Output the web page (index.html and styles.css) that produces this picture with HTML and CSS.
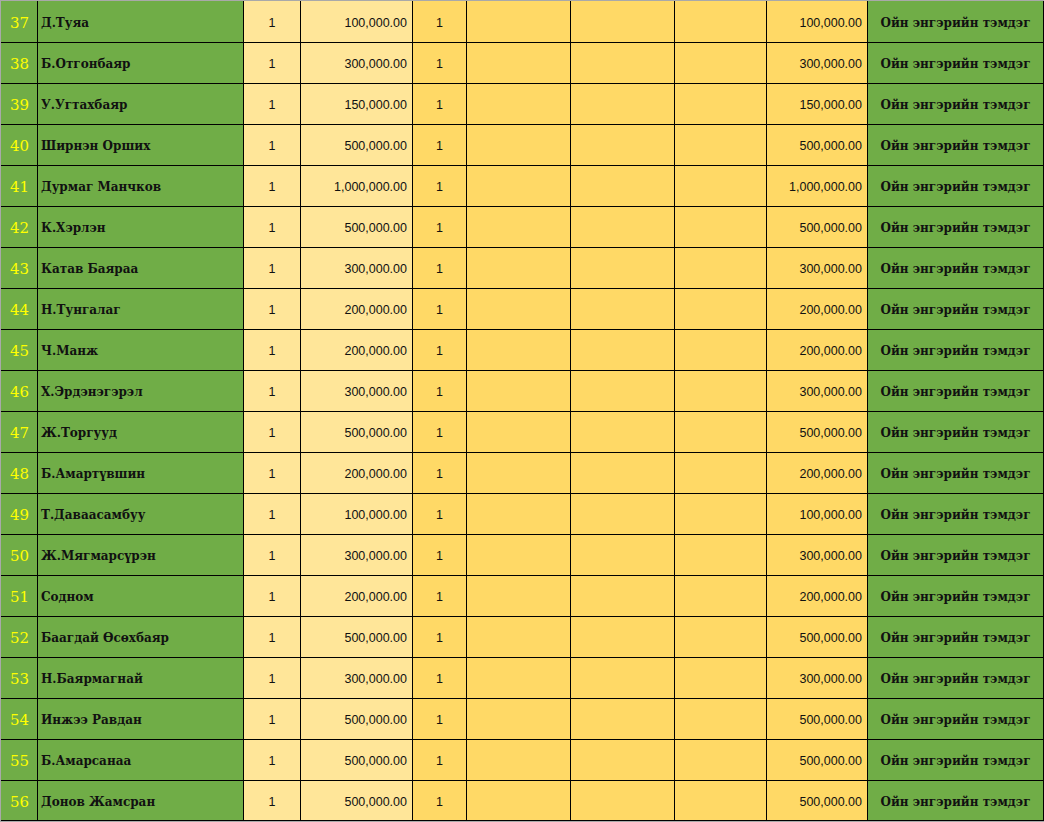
FILE: index.html
```html
<!DOCTYPE html>
<html>
<head>
<meta charset="utf-8">
<link rel="stylesheet" href="styles.css">
</head>
<body>
<div class="frame">
<div class="sheet">
<div class="c num">37</div><div class="c name">Д.Туяа</div><div class="c qty">1</div><div class="c amt">100,000.00</div><div class="c q2">1</div><div class="c e"></div><div class="c e"></div><div class="c e"></div><div class="c tot">100,000.00</div><div class="c lab">Ойн энгэрийн тэмдэг</div>
<div class="c num">38</div><div class="c name">Б.Отгонбаяр</div><div class="c qty">1</div><div class="c amt">300,000.00</div><div class="c q2">1</div><div class="c e"></div><div class="c e"></div><div class="c e"></div><div class="c tot">300,000.00</div><div class="c lab">Ойн энгэрийн тэмдэг</div>
<div class="c num">39</div><div class="c name">У.Угтахбаяр</div><div class="c qty">1</div><div class="c amt">150,000.00</div><div class="c q2">1</div><div class="c e"></div><div class="c e"></div><div class="c e"></div><div class="c tot">150,000.00</div><div class="c lab">Ойн энгэрийн тэмдэг</div>
<div class="c num">40</div><div class="c name">Ширнэн Орших</div><div class="c qty">1</div><div class="c amt">500,000.00</div><div class="c q2">1</div><div class="c e"></div><div class="c e"></div><div class="c e"></div><div class="c tot">500,000.00</div><div class="c lab">Ойн энгэрийн тэмдэг</div>
<div class="c num">41</div><div class="c name">Дурмаг Манчков</div><div class="c qty">1</div><div class="c amt">1,000,000.00</div><div class="c q2">1</div><div class="c e"></div><div class="c e"></div><div class="c e"></div><div class="c tot">1,000,000.00</div><div class="c lab">Ойн энгэрийн тэмдэг</div>
<div class="c num">42</div><div class="c name">К.Хэрлэн</div><div class="c qty">1</div><div class="c amt">500,000.00</div><div class="c q2">1</div><div class="c e"></div><div class="c e"></div><div class="c e"></div><div class="c tot">500,000.00</div><div class="c lab">Ойн энгэрийн тэмдэг</div>
<div class="c num">43</div><div class="c name">Катав Баяраа</div><div class="c qty">1</div><div class="c amt">300,000.00</div><div class="c q2">1</div><div class="c e"></div><div class="c e"></div><div class="c e"></div><div class="c tot">300,000.00</div><div class="c lab">Ойн энгэрийн тэмдэг</div>
<div class="c num">44</div><div class="c name">Н.Тунгалаг</div><div class="c qty">1</div><div class="c amt">200,000.00</div><div class="c q2">1</div><div class="c e"></div><div class="c e"></div><div class="c e"></div><div class="c tot">200,000.00</div><div class="c lab">Ойн энгэрийн тэмдэг</div>
<div class="c num">45</div><div class="c name">Ч.Манж</div><div class="c qty">1</div><div class="c amt">200,000.00</div><div class="c q2">1</div><div class="c e"></div><div class="c e"></div><div class="c e"></div><div class="c tot">200,000.00</div><div class="c lab">Ойн энгэрийн тэмдэг</div>
<div class="c num">46</div><div class="c name">Х.Эрдэнэгэрэл</div><div class="c qty">1</div><div class="c amt">300,000.00</div><div class="c q2">1</div><div class="c e"></div><div class="c e"></div><div class="c e"></div><div class="c tot">300,000.00</div><div class="c lab">Ойн энгэрийн тэмдэг</div>
<div class="c num">47</div><div class="c name">Ж.Торгууд</div><div class="c qty">1</div><div class="c amt">500,000.00</div><div class="c q2">1</div><div class="c e"></div><div class="c e"></div><div class="c e"></div><div class="c tot">500,000.00</div><div class="c lab">Ойн энгэрийн тэмдэг</div>
<div class="c num">48</div><div class="c name">Б.Амартүвшин</div><div class="c qty">1</div><div class="c amt">200,000.00</div><div class="c q2">1</div><div class="c e"></div><div class="c e"></div><div class="c e"></div><div class="c tot">200,000.00</div><div class="c lab">Ойн энгэрийн тэмдэг</div>
<div class="c num">49</div><div class="c name">Т.Даваасамбуу</div><div class="c qty">1</div><div class="c amt">100,000.00</div><div class="c q2">1</div><div class="c e"></div><div class="c e"></div><div class="c e"></div><div class="c tot">100,000.00</div><div class="c lab">Ойн энгэрийн тэмдэг</div>
<div class="c num">50</div><div class="c name">Ж.Мягмарсүрэн</div><div class="c qty">1</div><div class="c amt">300,000.00</div><div class="c q2">1</div><div class="c e"></div><div class="c e"></div><div class="c e"></div><div class="c tot">300,000.00</div><div class="c lab">Ойн энгэрийн тэмдэг</div>
<div class="c num">51</div><div class="c name">Содном</div><div class="c qty">1</div><div class="c amt">200,000.00</div><div class="c q2">1</div><div class="c e"></div><div class="c e"></div><div class="c e"></div><div class="c tot">200,000.00</div><div class="c lab">Ойн энгэрийн тэмдэг</div>
<div class="c num">52</div><div class="c name">Баагдай Өсөхбаяр</div><div class="c qty">1</div><div class="c amt">500,000.00</div><div class="c q2">1</div><div class="c e"></div><div class="c e"></div><div class="c e"></div><div class="c tot">500,000.00</div><div class="c lab">Ойн энгэрийн тэмдэг</div>
<div class="c num">53</div><div class="c name">Н.Баярмагнай</div><div class="c qty">1</div><div class="c amt">300,000.00</div><div class="c q2">1</div><div class="c e"></div><div class="c e"></div><div class="c e"></div><div class="c tot">300,000.00</div><div class="c lab">Ойн энгэрийн тэмдэг</div>
<div class="c num">54</div><div class="c name">Инжээ Равдан</div><div class="c qty">1</div><div class="c amt">500,000.00</div><div class="c q2">1</div><div class="c e"></div><div class="c e"></div><div class="c e"></div><div class="c tot">500,000.00</div><div class="c lab">Ойн энгэрийн тэмдэг</div>
<div class="c num">55</div><div class="c name">Б.Амарсанаа</div><div class="c qty">1</div><div class="c amt">500,000.00</div><div class="c q2">1</div><div class="c e"></div><div class="c e"></div><div class="c e"></div><div class="c tot">500,000.00</div><div class="c lab">Ойн энгэрийн тэмдэг</div>
<div class="c num">56</div><div class="c name">Донов Жамсран</div><div class="c qty">1</div><div class="c amt">500,000.00</div><div class="c q2">1</div><div class="c e"></div><div class="c e"></div><div class="c e"></div><div class="c tot">500,000.00</div><div class="c lab">Ойн энгэрийн тэмдэг</div>
</div>
</div>
</body>
</html>
```
FILE: styles.css
```css
html, body {
  margin: 0;
  padding: 0;
  background: #ffffff;
}
.frame {
  width: 1044px;
  height: 822px;
  box-sizing: border-box;
  border-top: 1px solid #a9a9a9;
  border-left: 1px solid #a9a9a9;
  border-bottom: 1px solid #a9a9a9;
}
.sheet {
  display: grid;
  grid-template-columns: 36px 205px 56px 111px 53px 103px 103px 91px 100px 175px;
  grid-template-rows: 41px repeat(18, 40px) 39px;
  gap: 1px;
  background: #000000;
  border-right: 1px solid #000000;
  border-bottom: 1px solid #000000;
}
.c {
  display: flex;
  align-items: center;
  overflow: hidden;
  white-space: nowrap;
  box-sizing: border-box;
  padding-top: 2px;
}
.num {
  background: #70ad47;
  color: #ffff00;
  justify-content: center;
  font-family: "DejaVu Serif", "Liberation Serif", serif;
  font-size: 15px;
  padding-left: 1px;
}
.name {
  background: #70ad47;
  color: #111111;
  font-family: "DejaVu Serif", "Liberation Serif", serif;
  font-weight: bold;
  font-size: 12px;
  padding-left: 3px;
}
.qty, .amt {
  background: #ffe699;
}
.q2, .e, .tot {
  background: #ffd966;
}
.qty, .q2, .amt, .tot {
  font-family: "Liberation Sans", Arial, sans-serif;
  font-size: 12.5px;
  color: #111111;
}
.qty, .q2 {
  justify-content: center;
}
.amt, .tot {
  justify-content: flex-end;
  padding-right: 5px;
}
.lab {
  background: #70ad47;
  color: #111111;
  justify-content: center;
  font-family: "DejaVu Serif", "Liberation Serif", serif;
  font-weight: bold;
  font-size: 12px;
}
```
